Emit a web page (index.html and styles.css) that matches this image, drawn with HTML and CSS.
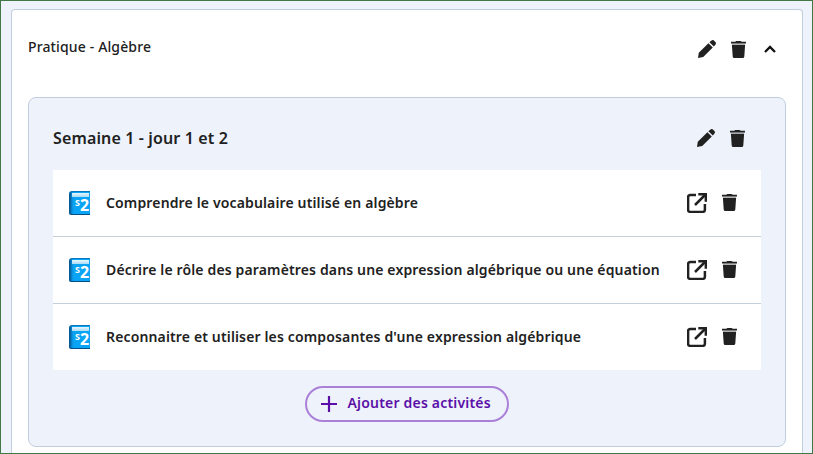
FILE: index.html
```html
<!DOCTYPE html>
<html lang="fr">
<head>
  <meta charset="UTF-8" />
  <meta name="viewport" content="width=device-width, initial-scale=1.0"/>
  <title>Pratique - Algèbre</title>
  <link rel="stylesheet" href="styles.css">
</head>
<body>

<svg class="sprite" width="0" height="0">
  <symbol id="crayon" viewBox="0 0 18 18">
    <path d="M0 18 L.8 12.8 L10.4 3.2 L14.8 7.6 L5.2 17 Z M11.4 2.2 L13.2 .8 Q14.8 -.6 16.4 .9 L17.2 1.7 Q18.7 3.2 17.3 4.8 L15.8 6.6 Z"/>
  </symbol>
  <symbol id="poubelle" viewBox="0 0 15 17">
    <path d="M0 .8 H4.4 Q4.8 0 5.5 0 H9.5 Q10.2 0 10.6 .8 H15 V2.6 H0 Z"/>
    <path d="M.9 4 H14.1 L13.3 15.5 Q13.2 17 11.7 17 H3.3 Q1.8 17 1.7 15.5 Z"/>
    <path d="M.9 2.6 H14.1 V4 H.9 Z" opacity=".35"/>
  </symbol>
  <symbol id="ouvrir" viewBox="0 0 20 20">
    <path class="trait" d="M9 2.1 H3.3 Q1.1 2.1 1.1 4.3 V16.7 Q1.1 18.9 3.3 18.9 H15.7 Q17.9 18.9 17.9 16.7 V11"/>
    <path class="trait" d="M8 12 L18 2"/>
    <path d="M11.3 0 H20 V8.8 H17.6 V2.4 H11.3 Z"/>
  </symbol>
</svg>

<div class="section">
  <div class="section-entete">
    <h2>Pratique - Algèbre</h2>
    <div class="actions">
      <svg class="crayon"><use href="#crayon"/></svg>
      <svg class="poubelle"><use href="#poubelle"/></svg>
      <svg class="chevron" viewBox="0 0 12 8"><path d="M1 7 L6 2 L11 7"/></svg>
    </div>
  </div>

  <div class="module">
    <div class="module-entete">
      <h3>Semaine 1 - jour 1 et 2</h3>
      <div class="actions">
        <svg class="crayon"><use href="#crayon"/></svg>
        <svg class="poubelle"><use href="#poubelle"/></svg>
      </div>
    </div>

    <ul class="activites">
      <li>
        <div class="livre"><small>S</small><b>2</b></div>
        <span>Comprendre le vocabulaire utilisé en algèbre</span>
        <svg class="ouvrir"><use href="#ouvrir"/></svg>
        <svg class="poubelle"><use href="#poubelle"/></svg>
      </li>
      <li>
        <div class="livre"><small>S</small><b>2</b></div>
        <span>Décrire le rôle des paramètres dans une expression algébrique ou une équation</span>
        <svg class="ouvrir"><use href="#ouvrir"/></svg>
        <svg class="poubelle"><use href="#poubelle"/></svg>
      </li>
      <li>
        <div class="livre"><small>S</small><b>2</b></div>
        <span>Reconnaitre et utiliser les composantes d'une expression algébrique</span>
        <svg class="ouvrir"><use href="#ouvrir"/></svg>
        <svg class="poubelle"><use href="#poubelle"/></svg>
      </li>
    </ul>

    <button class="btn">
      <svg class="plus" viewBox="0 0 16 16"><path d="M8 0 V16 M0 8 H16"/></svg>
      <span>Ajouter des activités</span>
    </button>
  </div>
</div>

</body>
</html>
```

FILE: styles.css
```css
* {
  box-sizing: border-box;
}

body {
  font-family: "Noto Sans", sans-serif;
  color: #212121;
  background: #edf2fb;
  margin: 0;
  height: 454px;
  padding: 8px 9px 0 10px;
  border: 1px solid #427746;
}

.sprite {
  display: block;
}

.section {
  height: 444px;
  padding: 0 16px;
  background: white;
  border: 1px solid #c2cedd;
  border-bottom: none;
  border-radius: 4px 4px 0 0;
}

.section-entete {
  display: flex;
  justify-content: space-between;
  height: 87px;
  padding: 27px 10px 0 0;
}

h2 {
  margin: 0;
  font-size: 14px;
  font-weight: 500;
  line-height: 20px;
  letter-spacing: .14px;
}

h3 {
  margin: 0;
  font-size: 16px;
  font-weight: 600;
  line-height: 24px;
  letter-spacing: .13px;
}

svg {
  flex: none;
  fill: #212121;
}

.actions {
  display: flex;
  align-items: center;
  gap: 15px;
  height: 24px;
}

.crayon {
  width: 18px;
  height: 18px;
}

.poubelle {
  width: 15px;
  height: 17px;
}

.chevron {
  width: 12px;
  height: 8px;
  margin-left: 3px;
  fill: none;
  stroke: #111;
  stroke-width: 2.3;
}

.module {
  height: 350px;
  padding: 28px 24px 0;
  background: #edf2fb;
  border: 1px solid #c2cedd;
  border-radius: 8px;
}

.module-entete {
  display: flex;
  justify-content: space-between;
  height: 44px;
  padding-right: 16px;
}

.activites {
  list-style: none;
  margin: 0 0 16px;
  padding: 0;
  background: white;
}

.activites li {
  display: flex;
  align-items: center;
  height: 67px;
  padding: 0 24px 0 16px;
  border-bottom: 1px solid #c2d0dc;
  font-size: 14px;
  font-weight: 600;
}

.activites li:last-child {
  height: 66px;
  border-bottom: none;
}

.activites span {
  flex: 1;
  margin-left: 16px;
  padding-bottom: 2px;
  letter-spacing: .145px;
  white-space: nowrap;
}

.activites .poubelle {
  margin-bottom: 1px;
}

/* petit livre bleu : tranche foncée, pages claires en haut */
.livre {
  display: flex;
  width: 21px;
  height: 24px;
  padding: 6px 0 0 6px;
  color: white;
  background:
    linear-gradient(#e6f6fc, #a9dbf3) 3px 1px / 17px 4px no-repeat,
    linear-gradient(to right, #075a94 1px, #0b8fdc 3px, #0aa4f6 5px);
  border-top: 1px solid #0879bd;
  border-bottom: 1px solid #074f87;
  border-radius: 3px 0 0 2px;
}

.livre small {
  width: 5px;
  font-size: 9px;
  font-weight: 700;
  line-height: 10px;
}

.livre b {
  font-size: 16px;
  font-weight: 700;
  line-height: 15px;
}

.ouvrir {
  width: 20px;
  height: 20px;
  margin-right: 15px;
}

.trait {
  fill: none;
  stroke: #212121;
  stroke-width: 2.5;
}

.btn {
  display: flex;
  align-items: center;
  gap: 10.5px;
  width: 204px;
  height: 36px;
  margin: 0 auto;
  padding: 0 14px;
  font: 600 14px "Noto Sans", sans-serif;
  letter-spacing: .19px;
  white-space: nowrap;
  color: #5b0fa8;
  background: transparent;
  border: 2px solid #ab80d8;
  border-radius: 18px;
  cursor: pointer;
}

.btn span {
  padding-bottom: 3px;
}

.plus {
  width: 16px;
  height: 16px;
  stroke: #5b0fa8;
  stroke-width: 2.2;
}
```
